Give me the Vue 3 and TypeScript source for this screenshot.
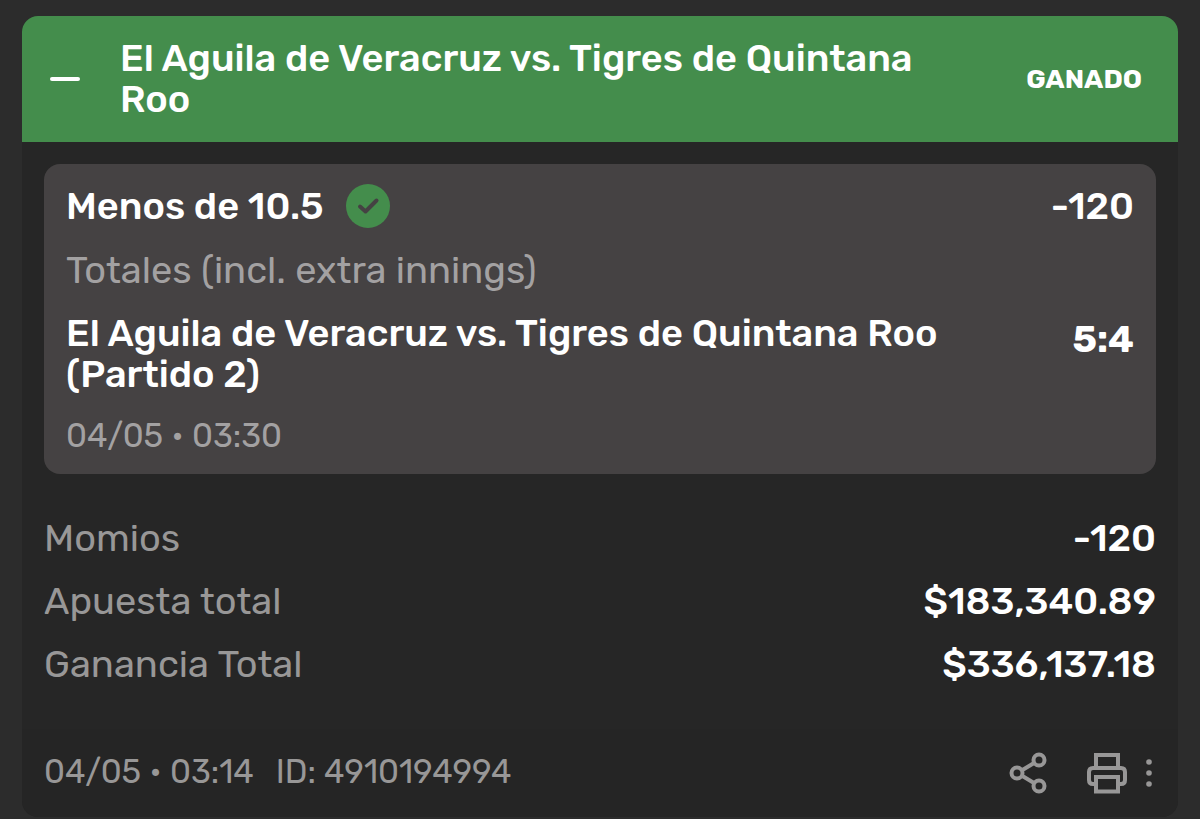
<script setup lang="ts">
import { ref } from 'vue'

interface SummaryRow {
  label: string
  value: string
}

const open = ref(true)

const summary: SummaryRow[] = [
  { label: 'Momios', value: '-120' },
  { label: 'Apuesta total', value: '$183,340.89' },
  { label: 'Ganancia Total', value: '$336,137.18' },
]
</script>

<template>
  <main class="page">
    <article class="ticket">
      <header class="head">
        <button class="toggle" type="button" aria-label="Contraer" :aria-expanded="open" @click="open = !open">
          <svg width="30" height="30" viewBox="0 0 30 30" aria-hidden="true">
            <path d="M2 15H28" stroke="#fff" stroke-width="4" stroke-linecap="round" />
          </svg>
        </button>
        <h1 class="title">El Aguila de Veracruz vs. Tigres de Quintana Roo</h1>
        <span class="status">GANADO</span>
      </header>

      <div v-if="open" class="body">
        <section class="pick">
          <div class="line">
            <h2 class="selection">Menos de 10.5</h2>
            <svg class="check" width="44" height="44" viewBox="0 0 44 44" aria-hidden="true">
              <circle cx="22" cy="22" r="22" fill="#448d4c" />
              <path d="M14 22.5L19.5 27.5L30.5 16.5" fill="none" stroke="#454243" stroke-width="4" stroke-linecap="round" stroke-linejoin="round" />
            </svg>
            <span class="figure">-120</span>
          </div>
          <p class="market">Totales (incl. extra innings)</p>
          <div class="event">
            <h3 class="name">El Aguila de Veracruz vs. Tigres de Quintana Roo (Partido 2)</h3>
            <span class="figure score">5:4</span>
          </div>
          <time class="date">04/05 • 03:30</time>
        </section>

        <dl class="summary">
          <div v-for="row in summary" :key="row.label" class="row">
            <dt>{{ row.label }}</dt>
            <dd>{{ row.value }}</dd>
          </div>
        </dl>
      </div>

      <footer class="foot">
        <time>04/05 • 03:14</time>
        <span class="id">ID: 4910194994</span>
        <div class="actions">
          <button class="icon" type="button" aria-label="Compartir">
            <svg width="40" height="44" viewBox="0 0 40 44" fill="none" stroke="#989797" stroke-width="4" aria-hidden="true">
              <circle cx="9" cy="22" r="5.500" />
              <circle cx="31" cy="9" r="5.500" />
              <circle cx="31" cy="35" r="5.500" />
              <path d="M14 19.200L26 12M14 24.800L26 32" />
            </svg>
          </button>
          <button class="icon print" type="button" aria-label="Imprimir">
            <svg width="42" height="44" viewBox="0 0 42 44" fill="none" stroke="#989797" stroke-width="4" aria-hidden="true">
              <path d="M10 17V4H32V17" />
              <path d="M10 33H7Q3 33 3 29V21Q3 17 7 17H35Q39 17 39 21V29Q39 33 35 33H32" />
              <path d="M10 26H32V40.500H10Z" />
            </svg>
          </button>
          <button class="icon more" type="button" aria-label="Más opciones">
            <svg width="6" height="44" viewBox="0 0 6 44" fill="#989797" aria-hidden="true">
              <circle cx="3" cy="11" r="2.800" />
              <circle cx="3" cy="22" r="2.800" />
              <circle cx="3" cy="33" r="2.800" />
            </svg>
          </button>
        </div>
      </footer>
    </article>
  </main>
</template>

<style>
body {
  margin: 0;
  background: #2c2c2c;
}
</style>

<style scoped>
.page {
  padding: 16px 22px 2px;
  font-family: Rubik, Roboto, "Noto Sans", sans-serif;
  font-size: 38px;
  line-height: 41px;
  color: #fff;
}
.ticket {
  border-radius: 16px;
  overflow: hidden;
  background: #262626;
}
h1, h2, h3, p, dl, dd {
  margin: 0;
}
h1, h2, h3 {
  font-size: inherit;
  font-weight: 500;
}
button {
  display: flex;
  padding: 0;
  border: 0;
  background: none;
  cursor: pointer;
}
.head {
  display: flex;
  align-items: center;
  padding: 22px 36px 22px 28px;
  background: #448d4c;
}
.toggle {
  margin-right: 40px;
}
.title {
  flex: 1;
  margin-right: 64px;
}
.status {
  font-size: 27px;
  font-weight: 700;
}
.body {
  padding: 22px;
}
.pick {
  padding: 20px 22px 18px;
  border-radius: 16px;
  background: #454243;
}
.line {
  display: flex;
  align-items: center;
}
.check {
  margin-left: 22px;
}
.figure {
  margin-left: auto;
  font-weight: 500;
}
.market {
  margin-top: 22px;
  color: #a3a1a2;
}
.event {
  display: flex;
  align-items: flex-start;
  margin-top: 22px;
}
.name {
  flex: 1;
  margin-right: 48px;
}
.score {
  padding-top: 6px;
  font-weight: 700;
}
.date {
  display: block;
  margin-top: 20px;
  font-size: 33px;
  color: #a3a1a2;
}
.summary {
  display: grid;
  gap: 22px;
  padding: 44px 0 22px;
}
.row {
  display: flex;
  justify-content: space-between;
}
dt {
  color: #989797;
}
dd {
  font-weight: 500;
}
.foot {
  display: flex;
  align-items: center;
  padding: 18px 26px 22px 22px;
  font-size: 33px;
  color: #989797;
  background: #252525;
}
.id {
  margin-left: 22px;
}
.actions {
  display: flex;
  align-items: center;
  margin-left: auto;
  padding-top: 4px;
}
.print {
  margin-left: 38px;
}
.more {
  margin-left: 18px;
}
</style>
